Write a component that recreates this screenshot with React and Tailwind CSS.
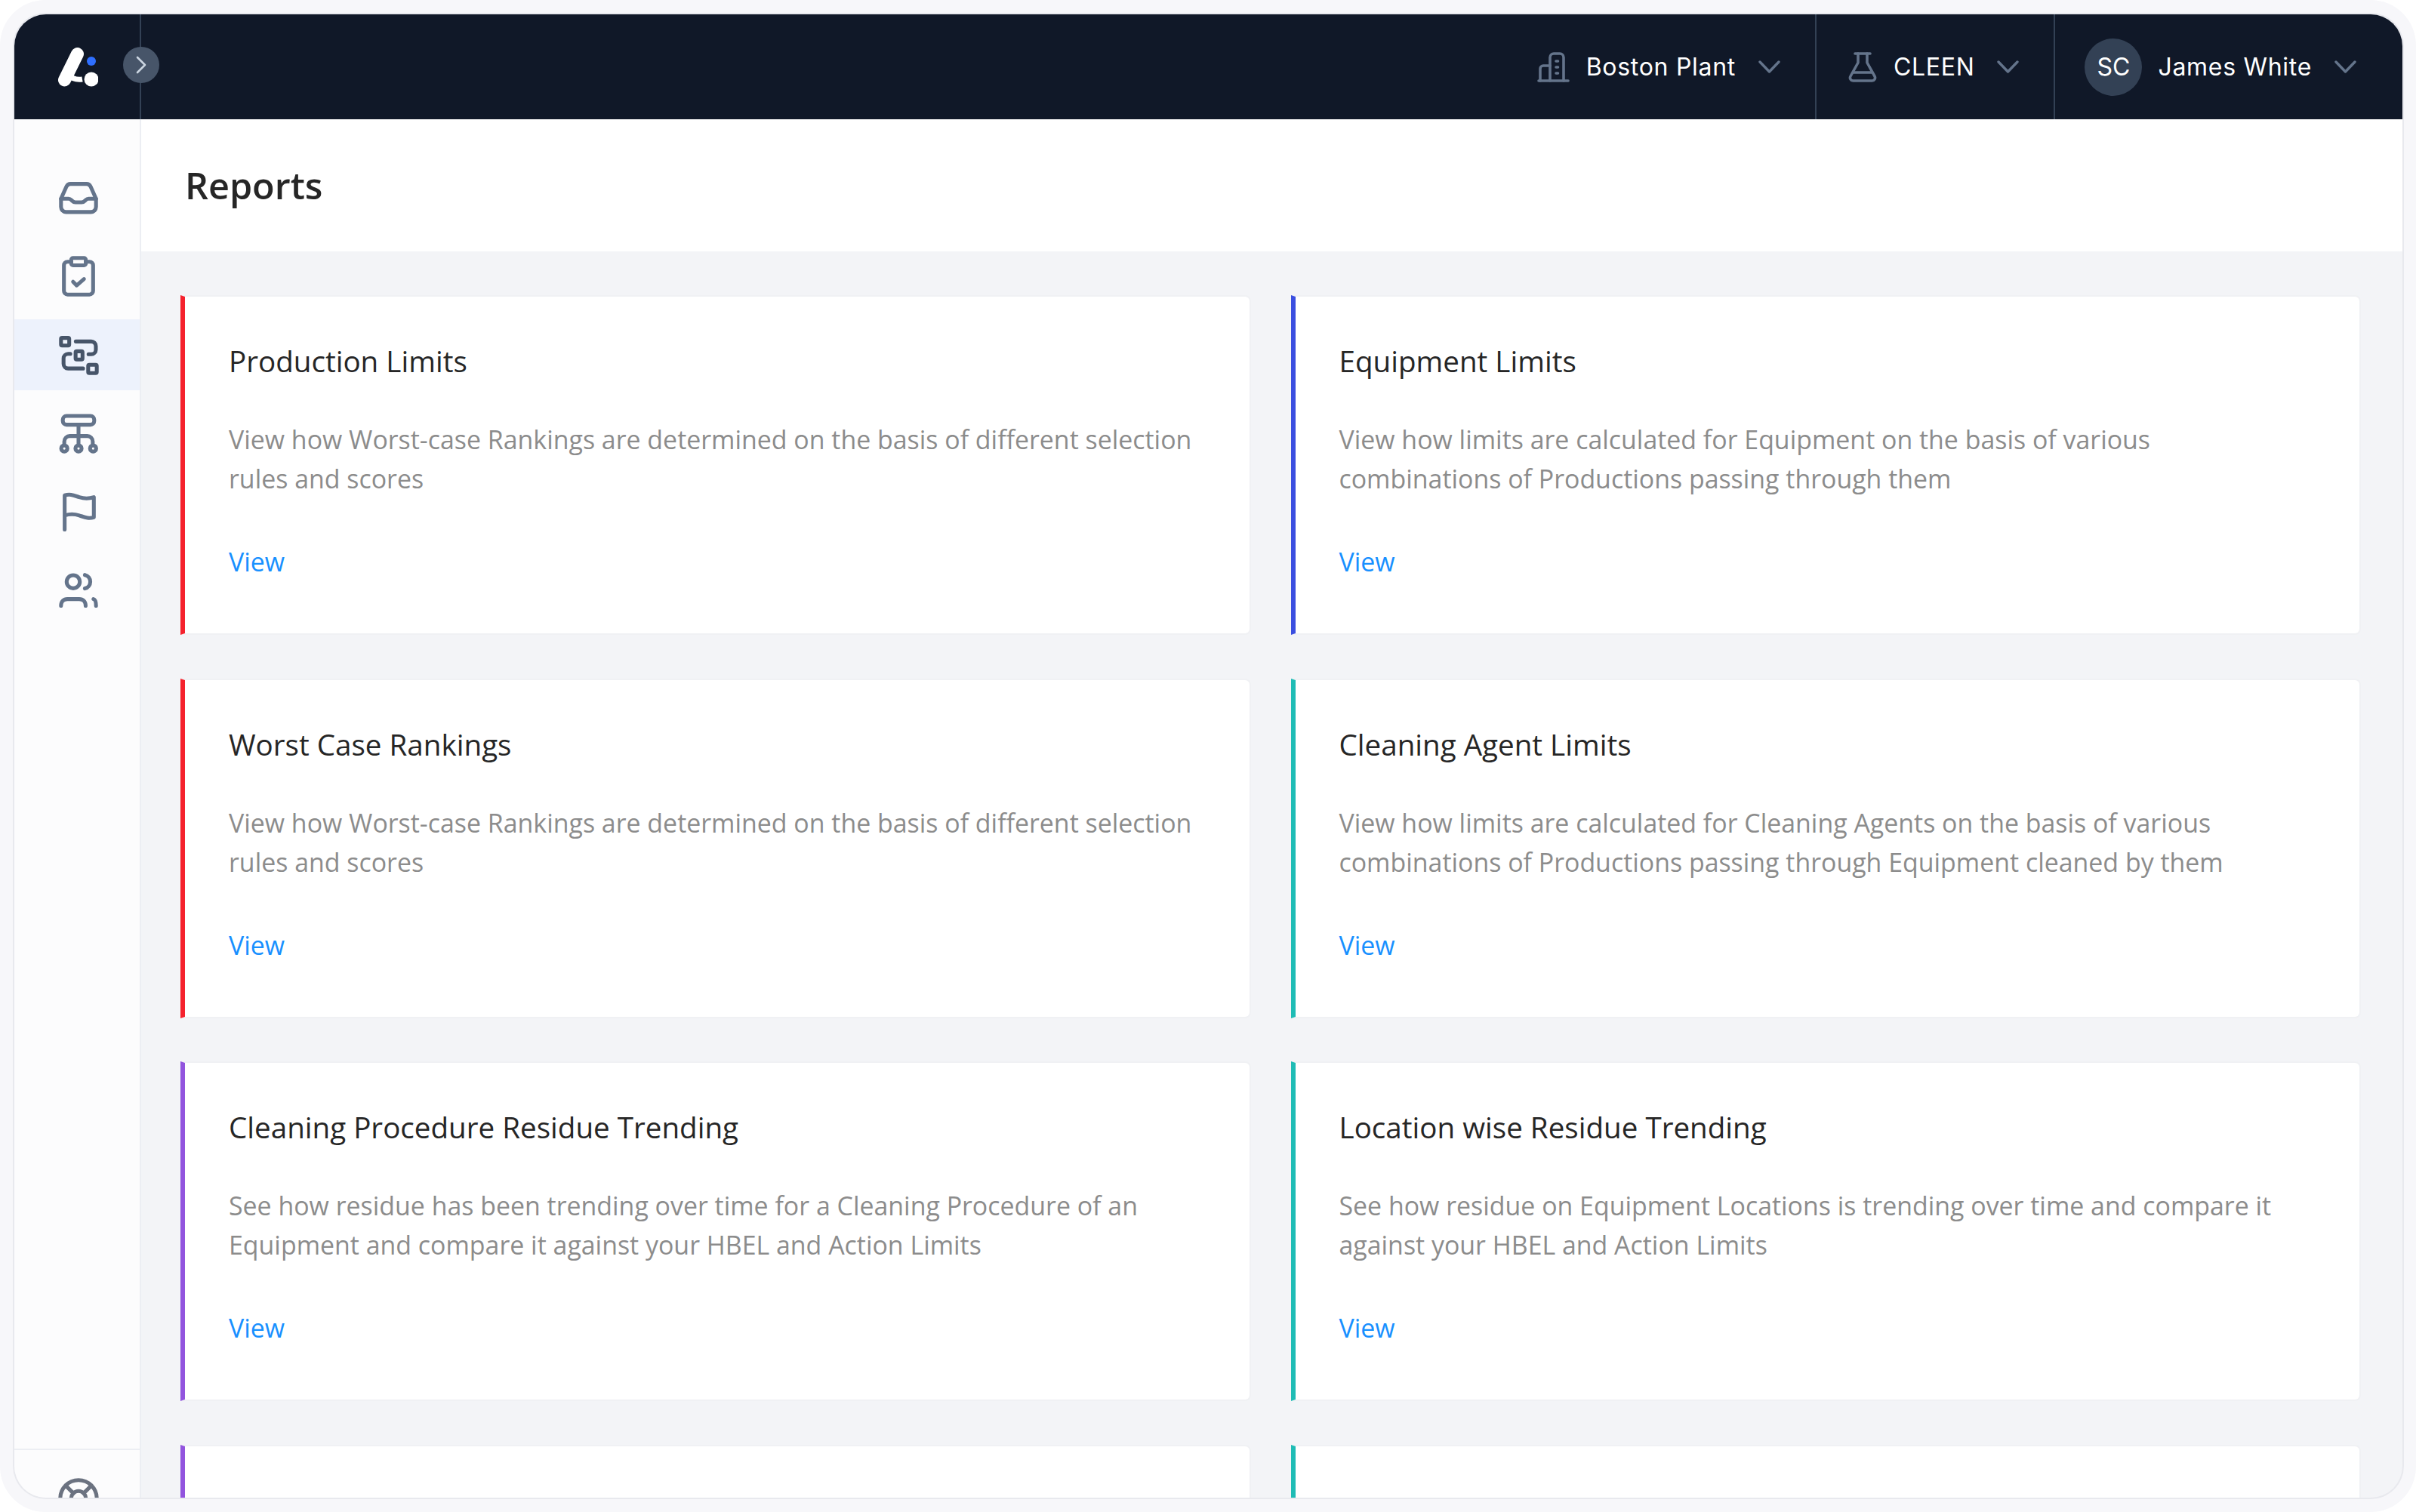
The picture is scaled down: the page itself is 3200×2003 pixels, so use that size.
import React from 'react';

const cards = [
  { t: 'Production Limits', d: 'View how Worst-case Rankings are determined on the basis of different selection rules and scores', c: 'border-l-[#f5222d]' },
  { t: 'Equipment Limits', d: 'View how limits are calculated for Equipment on the basis of various combinations of Productions passing through them', c: 'border-l-[#3b4fe0]' },
  { t: 'Worst Case Rankings', d: 'View how Worst-case Rankings are determined on the basis of different selection rules and scores', c: 'border-l-[#f5222d]' },
  { t: 'Cleaning Agent Limits', d: 'View how limits are calculated for Cleaning Agents on the basis of various combinations of Productions passing through Equipment cleaned by them', c: 'border-l-[#1fbcb5]' },
  { t: 'Cleaning Procedure Residue Trending', d: 'See how residue has been trending over time for a Cleaning Procedure of an Equipment and compare it against your HBEL and Action Limits', c: 'border-l-[#9254de]' },
  { t: 'Location wise Residue Trending', d: 'See how residue on Equipment Locations is trending over time and compare it against your HBEL and Action Limits', c: 'border-l-[#1fbcb5]' },
  { c: 'border-l-[#9254de]' },
  { c: 'border-l-[#1fbcb5]' },
];

const I = ({ children }) => (
  <svg viewBox="0 0 24 24" fill="none" stroke="currentColor" strokeWidth="2.1" strokeLinecap="round" strokeLinejoin="round" className="w-[58px] h-[58px]">
    {children}
  </svg>
);

const Inbox = () => (
  <I>
    <path d="M2.4 12.5 L5.4 5.8 A2.5 2.5 0 0 1 7.6 4.4 H16.4 A2.5 2.5 0 0 1 18.6 5.8 L21.6 12.5 V17 a2.8 2.8 0 0 1-2.8 2.8 H5.2 A2.8 2.8 0 0 1 2.4 17 Z" />
    <path d="M2.4 12.5 H6.5 c1 0 1.3.5 1.8 1 .6.6 1.2 1 2 1 h3.4 c.8 0 1.4-.4 2-1 .5-.5.8-1 1.8-1 H21.6" />
  </I>
);
const Clip = () => (
  <I>
    <rect x="8" y="2" width="8" height="4" rx="1" />
    <path d="M16 4h2a2 2 0 0 1 2 2v14a2 2 0 0 1-2 2H6a2 2 0 0 1-2-2V6a2 2 0 0 1 2-2h2" />
    <path d="m9 15 2 2 4-3.5" />
  </I>
);
const Flow = () => (
  <I>
    <rect x="2.4" y="2.75" width="4.5" height="4.2" rx="0.6" />
    <rect x="10.4" y="10.1" width="3.8" height="4.5" rx="0.6" />
    <rect x="17.3" y="17.5" width="4.7" height="4.5" rx="0.6" />
    <path d="M10.5 4.7 H19 a2.5 2.5 0 0 1 2.5 2.5 v2 a2.5 2.5 0 0 1-2.5 2.5 h-1.5" />
    <path d="M7.5 11.5 H6.3 a2.5 2.5 0 0 0-2.5 2.5 V17 a2.5 2.5 0 0 0 2.5 2.5 H14.5" />
  </I>
);
const Org = () => (
  <I>
    <rect x="3.4" y="2.5" width="17.2" height="4.8" rx="2" />
    <path d="M12 7.3 V18.5" />
    <path d="M4.2 18.5 V16.5 a3 3 0 0 1 3-3 h9.6 a3 3 0 0 1 3 3 v2" />
    <circle cx="4.2" cy="20.3" r="1.7" />
    <circle cx="12" cy="20.3" r="1.7" />
    <circle cx="20" cy="20.3" r="1.7" />
  </I>
);
const Flag = () => (
  <I>
    <path d="M4.4 21.7 V3 c3-1 5 0 8 1 s5 1 8 0 V15 c-3 1-5 0-8-1 s-5-1-8 0" />
  </I>
);
const Users = () => (
  <I>
    <circle cx="9.1" cy="7.3" r="3.6" />
    <path d="M2.4 20.5 c0-2.5 1.5-3.7 3.5-3.7 h6.5 c2 0 3.5 1.2 3.5 3.7" />
    <path d="M15.5 3.6 a3.8 3.8 0 0 1 0 7.4" />
    <path d="M20.2 16.8 c1 .3 1.4 1.5 1.4 3.7" />
  </I>
);
const Buoy = () => (
  <I>
    <circle cx="12" cy="12" r="10" />
    <path d="m4.93 4.93 4.24 4.24" />
    <path d="m14.83 9.17 4.24-4.24" />
    <circle cx="12" cy="12" r="4" />
  </I>
);

const Chevron = () => (
  <svg viewBox="0 0 29 17" fill="none" stroke="#64748b" strokeWidth="3.4" strokeLinecap="round" strokeLinejoin="round" className="w-[29px] h-[17px]">
    <path d="M2 2 L14.5 15 L27 2" />
  </svg>
);

const Building = () => (
  <svg viewBox="0 0 43 40" fill="none" stroke="#64748b" strokeWidth="3.6" strokeLinecap="round" strokeLinejoin="round" className="w-[43px] h-[40px]">
    <path d="M17 38 V7 a5 5 0 0 1 5-5 h8 a5 5 0 0 1 5 5 V38" />
    <path d="M17 18 H8 a4 4 0 0 0-4 4 V38" />
    <path d="M2 38 H41" />
    <path d="M25 12 h2.5 M25 20 h2.5 M25 28 h2.5" />
  </svg>
);
const Flask = () => (
  <svg viewBox="0 0 38 40" fill="none" stroke="#64748b" strokeWidth="3.6" strokeLinecap="round" strokeLinejoin="round" className="w-[38px] h-[40px]">
    <path d="M9 2 H29" />
    <path d="M13 2 V14 L3 32 a4 4 0 0 0 3.6 6 H31.4 a4 4 0 0 0 3.6-6 L25 14 V2" />
    <path d="M7 27 H31" />
  </svg>
);
const Logo = () => (
  <svg viewBox="0 0 53 52" fill="none" className="w-[53px] h-[52px]">
    <path d="M25.5 8.5 L8.5 43" stroke="#fff" strokeWidth="17" strokeLinecap="round" />
    <path d="M12 35 Q21 44 32 42" stroke="#fff" strokeWidth="7" />
    <circle cx="44" cy="42" r="9.5" fill="#fff" />
    <circle cx="44" cy="18" r="6" fill="#2f6fff" />
  </svg>
);

const NavItem = ({ children, active }) => (
  <div className={`h-[94px] pl-[4px] flex items-center justify-center ${active ? 'bg-[#edf2fc] text-[#475569]' : 'text-[#64748b]'}`}>
    {children}
  </div>
);

const Card = ({ t, d, c }) => (
  <div className={`h-[450px] bg-white border-2 border-[#f0f1f4] border-l-[6px] rounded-r-lg pl-[58px] pr-[56px] pt-[61px] ${c}`}>
    {t && (
      <>
        <div className="text-[38.6px] leading-[48px] text-[#262626]">{t}</div>
        <p className="mt-[54px] text-[33.9px] leading-[52px] text-[#8c8c8c]">{d}</p>
        <a className="block mt-[58px] text-[33.9px] leading-[52px] text-[#1890ff]">View</a>
      </>
    )}
  </div>
);

export default function App() {
  return (
    <div className="w-[3200px] h-[2003px] bg-white overflow-hidden">
      <div className="w-full h-full bg-[#f7f7fa] rounded-[60px] pt-[19px] pb-[19px] pl-[19px] pr-[18px]" style={{ fontFamily: '"Open Sans", sans-serif' }}>
        <div className="relative w-full h-full rounded-[42px] overflow-hidden flex flex-col bg-[#f3f4f7] shadow-[0_0_0_2px_#e8e9ee]">
          <header className="h-[139px] shrink-0 bg-[#101828] flex items-stretch text-white" style={{ fontFamily: 'Inter, sans-serif' }}>
            <div className="w-[168px] shrink-0 border-r-2 border-[#334155] flex items-start pt-[44px] pl-[58px]">
              <Logo />
            </div>
            <div className="flex-1" />
            <div className="flex items-center gap-[22px] pr-[46px]">
              <Building />
              <span className="text-[32px] tracking-[0.7px]">Boston Plant</span>
              <span className="ml-[8px]"><Chevron /></span>
            </div>
            <div className="flex items-center gap-[22px] pl-[42px] pr-[46px] border-l-2 border-[#334155]">
              <Flask />
              <span className="text-[32px] tracking-[0.7px]">CLEEN</span>
              <span className="ml-[8px]"><Chevron /></span>
            </div>
            <div className="flex items-center gap-[21px] pl-[39px] pr-[61px] border-l-2 border-[#334155]">
              <div className="w-[76px] h-[76px] rounded-full bg-[#334155] flex items-center justify-center text-[32px]">SC</div>
              <span className="text-[32px] tracking-[0.7px]">James White</span>
              <span className="ml-[9px]"><Chevron /></span>
            </div>
          </header>

          <div className="absolute left-[144px] top-[43px] w-[48px] h-[48px] rounded-full bg-[#475569] flex items-center justify-center">
            <svg viewBox="0 0 14 24" fill="none" stroke="#cbd5e1" strokeWidth="2.6" strokeLinecap="round" strokeLinejoin="round" className="w-[14px] h-[24px]">
              <path d="M2 2 L12 12 L2 22" />
            </svg>
          </div>

          <div className="flex-1 flex min-h-0">
            <aside className="w-[168px] shrink-0 bg-[#fcfcfd] border-r-2 border-[#eceef3] flex flex-col">
              <nav className="pt-[57px] flex flex-col gap-[10px] flex-1">
                <NavItem><Inbox /></NavItem>
                <NavItem><Clip /></NavItem>
                <NavItem active><Flow /></NavItem>
                <NavItem><Org /></NavItem>
                <NavItem><Flag /></NavItem>
                <NavItem><Users /></NavItem>
              </nav>
              <div className="h-[65px] shrink-0 border-t-2 border-[#eceef3] pt-[35px] pl-[4px] flex justify-center text-[#6b7280]">
                <Buoy />
              </div>
            </aside>

            <main className="flex-1 min-w-0 flex flex-col overflow-hidden">
              <div className="h-[175px] shrink-0 bg-white flex items-center pl-[58px] text-[48.5px] font-semibold text-[#262626]">Reports</div>
              <div className="pt-[58px] pl-[52px] pr-[55px] grid grid-cols-2 gap-x-[53px] gap-y-[57.67px]">
                {cards.map((c, i) => <Card key={i} {...c} />)}
              </div>
            </main>
          </div>
        </div>
      </div>
    </div>
  );
}
